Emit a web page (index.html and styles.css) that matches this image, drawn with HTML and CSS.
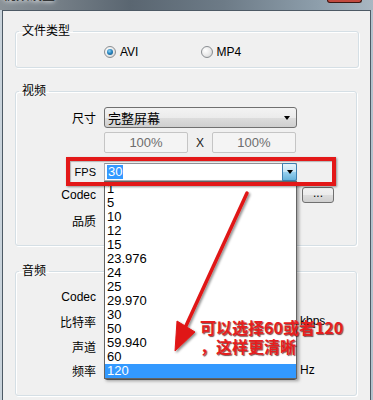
FILE: index.html
```html
<!DOCTYPE html>
<html lang="zh-CN">
<head>
    <meta charset="UTF-8">
    <meta name="viewport" content="width=device-width, initial-scale=1.0">
    <title>视频设置</title>
    <link rel="stylesheet" href="styles.css">
</head>
<body>
    <div class="titlebar">
        <span class="title">视频设置</span>
        <span class="close"></span>
    </div>

    <div class="window">
        <fieldset class="group group-type">
            <legend>文件类型</legend>
            <div class="row row-radio">
                <span class="lbl"></span>
                <div class="radio-set">
                    <label class="radio checked"><i></i>AVI</label>
                    <label class="radio"><i></i>MP4</label>
                </div>
            </div>
        </fieldset>

        <fieldset class="group group-video">
            <legend>视频</legend>
            <div class="row row-size">
                <span class="lbl">尺寸</span>
                <div class="combo combo-ro">完整屏幕<b class="tri"></b></div>
            </div>
            <div class="row row-percent">
                <span class="lbl"></span>
                <div class="percent">
                    <span class="edit disabled">100%</span>
                    <span class="times">X</span>
                    <span class="edit disabled">100%</span>
                </div>
            </div>
            <div class="row row-fps">
                <span class="lbl lbl-fps">FPS</span>
                <div class="combo combo-edit"><span class="sel">30</span><span class="drop"><b class="tri"></b></span></div>
            </div>
            <div class="row row-codec">
                <span class="lbl">Codec</span>
                <div class="combo combo-ro"></div>
                <span class="btn">...</span>
            </div>
            <div class="row row-quality">
                <span class="lbl">品质</span>
                <div class="combo combo-ro"></div>
            </div>
        </fieldset>

        <fieldset class="group group-audio">
            <legend>音频</legend>
            <div class="row row-a1">
                <span class="lbl">Codec</span>
                <div class="combo combo-ro"></div>
            </div>
            <div class="row row-a2">
                <span class="lbl">比特率</span>
                <div class="combo combo-ro"></div>
                <span class="unit">kbps</span>
            </div>
            <div class="row row-a3">
                <span class="lbl">声道</span>
                <div class="combo combo-ro"></div>
            </div>
            <div class="row row-a4">
                <span class="lbl">频率</span>
                <div class="combo combo-ro"></div>
                <span class="unit">Hz</span>
            </div>
        </fieldset>
    </div>

    <!-- open FPS dropdown -->
    <ul class="droplist">
        <li>1</li>
        <li>5</li>
        <li>10</li>
        <li>12</li>
        <li>15</li>
        <li>23.976</li>
        <li>24</li>
        <li>25</li>
        <li>29.970</li>
        <li>30</li>
        <li>50</li>
        <li>59.940</li>
        <li>60</li>
        <li class="hl">120</li>
    </ul>

    <!-- red annotation -->
    <div class="mark-box"></div>
    <svg class="mark-arrow" width="373" height="400" viewBox="0 0 373 400">
        <defs>
            <filter id="shade" x="-20%" y="-20%" width="140%" height="140%">
                <feDropShadow dx="1.5" dy="1.5" stdDeviation="1" flood-color="#000" flood-opacity="0.45"/>
            </filter>
        </defs>
        <g filter="url(#shade)" fill="#e01818" stroke="#e01818">
            <line x1="247" y1="193" x2="185" y2="328" stroke-width="3.5" stroke-linecap="round"/>
            <polygon points="175,351 177,321 195,332" stroke-width="1" stroke-linejoin="round"/>
        </g>
    </svg>
    <div class="note">可以选择60或者120<br>，这样更清晰</div>
</body>
</html>
```

FILE: styles.css
```css
* {
    box-sizing: border-box;
}
body {
    margin: 0;
    height: 400px;
    overflow: hidden;
    position: relative;
    background: linear-gradient(90deg, #c9d3db 0%, #b3c1cc 100%);
    font-family: "Liberation Sans", "Noto Sans CJK SC", sans-serif;
    font-size: 12px;
    color: #000;
}
.titlebar {
    height: 10px;
    display: flex;
    overflow: hidden;
    background: linear-gradient(90deg, #8a9298 0%, #5a6671 35%, #6d7b87 60%, #8d9eab 85%, #a9b7c2 100%);
}
.title {
    margin-top: -14px;
    padding-left: 3px;
    line-height: 17px;
    font-size: 13px;
    color: #111;
    text-shadow: 0 0 4px #fff, 0 0 6px #fff;
}
.close {
    margin-left: auto;
    margin-right: 11px;
    width: 35px;
    height: 3px;
    background: #c24a3f;
    border: 1px solid #3c1612;
    border-top: 0;
    border-radius: 0 0 4px 4px;
}
.window {
    margin: 0 2px;
    height: 390px;
    padding-top: 13px;
    background: #f0f0f0;
    border: 1px solid #4d5a65;
    border-bottom: 0;
}

/* group boxes */
.group {
    margin: 0 0 0 12px;
    width: 342px;
    min-width: 0;
    padding: 0 0 0 10px;
    border: 1px solid #d5dfe5;
    border-radius: 3px;
    box-shadow: inset 1px 1px 0 #fff, 1px 1px 0 #fff;
}
.group legend {
    margin-left: -7px;
    padding: 0 3px;
    font-size: 12px;
    line-height: 15px;
}
.group-type {
    width: 344px;
    padding-bottom: 7px;
}
.group-video {
    margin-top: 16px;
    padding-bottom: 17px;
}
.group-audio {
    margin-top: 18px;
    padding-bottom: 15px;
}

/* form rows: label | control | extra */
.row {
    display: grid;
    grid-template-columns: 78px 193px auto;
    align-items: center;
}
.lbl {
    padding-right: 8px;
    text-align: right;
    white-space: nowrap;
}
.lbl-fps {
    font-size: 11px;
}
.row-radio { margin-top: 5px; height: 16px; }
.row-size { margin-top: 8px; height: 20px; }
.row-percent { margin-top: 5px; height: 21px; }
.row-fps { margin-top: 10px; height: 18px; }
.row-codec { margin-top: 5px; height: 17px; }
.row-quality { margin-top: 9px; height: 16px; }
.row-a1 { margin-top: 8px; height: 20px; }
.row-a2 { margin-top: 4px; height: 20px; }
.row-a3 { margin-top: 5px; height: 20px; }
.row-a4 { margin-top: 4px; height: 20px; }

/* radios */
.radio-set {
    display: flex;
}
.radio {
    width: 114px;
    display: flex;
    align-items: center;
    gap: 4px;
}
.radio i {
    width: 12px;
    height: 12px;
    border-radius: 50%;
    border: 1px solid #8a8e92;
    background: radial-gradient(circle at 35% 35%, #ffffff 0%, #e8e8e8 55%, #c8cacc 100%);
    display: flex;
    align-items: center;
    justify-content: center;
}
.radio.checked i::after {
    content: "";
    width: 6px;
    height: 6px;
    border-radius: 50%;
    background: radial-gradient(circle at 40% 35%, #8fd3f5 0%, #2a86c0 45%, #0d4c78 100%);
}

/* combos */
.combo {
    height: 100%;
    position: relative;
    display: flex;
    align-items: center;
    padding-left: 3px;
    font-size: 13px;
}
.combo-ro {
    border: 1px solid #707070;
    border-radius: 3px;
    background: linear-gradient(#f3f3f3 0%, #ebebeb 50%, #dddddd 51%, #cfcfcf 100%);
}
.combo-ro .tri {
    position: absolute;
    right: 6px;
    top: 8px;
}
.tri {
    width: 0;
    height: 0;
    border-left: 3.5px solid transparent;
    border-right: 3.5px solid transparent;
    border-top: 4px solid #000;
}
.combo-edit {
    border: 1px solid #abadb3;
    border-top-color: #8f9095;
    background: #fff;
    padding-left: 2px;
}
.sel {
    background: #3399ff;
    color: #fff;
    line-height: 14px;
    padding: 0 1px;
}
.drop {
    position: absolute;
    right: -1px;
    top: -1px;
    bottom: -1px;
    width: 15px;
    border: 1px solid #3c7fb1;
    border-radius: 0 2px 2px 0;
    background: linear-gradient(#e5f4fc 0%, #c4e5f6 50%, #98d1ef 51%, #68b3db 100%);
    display: flex;
    align-items: center;
    justify-content: center;
}

/* size percent */
.percent {
    display: flex;
    justify-content: space-between;
    align-items: center;
    height: 100%;
    padding-right: 1px;
}
.edit {
    width: 84px;
    height: 100%;
    border: 1px solid #c5c5c5;
    border-radius: 2px;
    background: #f4f4f4;
    display: flex;
    align-items: center;
    justify-content: center;
    font-size: 13px;
}
.edit.disabled {
    color: #6d6d6d;
}
.times {
    font-size: 12px;
    color: #222;
}
.btn {
    margin-left: 5px;
    width: 32px;
    height: 16px;
    border: 1px solid #707070;
    border-radius: 3px;
    background: linear-gradient(#f2f2f2 0%, #ebebeb 50%, #dddddd 51%, #cfcfcf 100%);
    text-align: center;
    line-height: 10px;
    font-size: 12px;
}
.unit {
    margin-left: 3px;
}

/* dropdown list */
.droplist {
    position: absolute;
    left: 104px;
    top: 181px;
    width: 193px;
    height: 198px;
    margin: 0;
    padding: 0;
    list-style: none;
    background: #fff;
    border: 1px solid #646464;
    box-shadow: 2px 2px 3px rgba(0, 0, 0, 0.35);
    font-size: 13px;
}
.droplist li {
    height: 14px;
    line-height: 14px;
    padding-left: 2px;
}
.droplist li.hl {
    background: #3399ff;
    color: #fff;
}

/* annotation */
.mark-box {
    position: absolute;
    left: 66px;
    top: 157px;
    width: 270px;
    height: 29px;
    border: 4px solid #e31818;
    box-shadow: 1px 1px 2px rgba(0, 0, 0, 0.4), inset 1px 1px 1px rgba(0, 0, 0, 0.25);
}
.mark-arrow {
    position: absolute;
    left: 0;
    top: 0;
    pointer-events: none;
}
.note {
    position: absolute;
    left: 200px;
    top: 318px;
    font-family: "Noto Sans CJK SC", sans-serif;
    font-weight: bold;
    font-size: 16px;
    line-height: 19px;
    color: #e61e1e;
    text-shadow: 1px 1px 1px rgba(70, 0, 0, 0.7);
    white-space: nowrap;
}
```
